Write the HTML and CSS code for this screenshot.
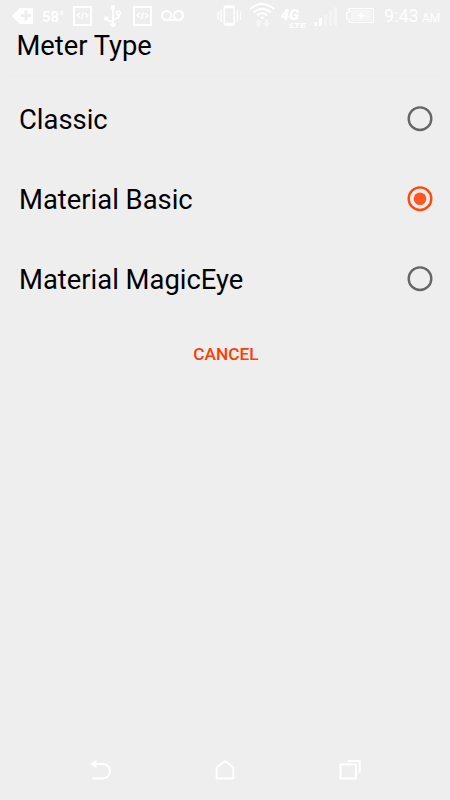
FILE: index.html
```
<!DOCTYPE html>
<html lang="en">
<head>
    <meta charset="UTF-8">
    <meta name="viewport" content="width=device-width, initial-scale=1.0">
    <title>Meter Type</title>
    <link rel="stylesheet" href="styles.css">
</head>
<body>
    <div class="status-bar">
        <svg class="tag" width="22" height="32" viewBox="12 0 22 32">
            <path fill="#fff" d="M12 16L18.500 9Q19 8 20 8H33V24H20Q19 24 18.500 23Z"/>
            <path stroke="#eee" stroke-width="3" d="M21 15.500H31M26 10.500V20.500"/>
        </svg>
        <span class="temp">58<span class="degree">°</span></span>
        <svg class="code" width="20" height="32" viewBox="73 0 20 32">
            <rect x="74" y="7" width="17" height="18" fill="none" stroke="#fff" stroke-width="2"/>
            <path fill="none" stroke="#fff" stroke-width="1.200" d="M80 13L77 15.500L80 18M85 13L88 15.500L85 18M83.500 12L81.500 19"/>
        </svg>
        <svg class="usb" width="18" height="32" viewBox="104 0 18 32">
            <g fill="none" stroke="#fff" stroke-width="1.800">
                <path d="M113 8V24M106 17V18.500Q106 20 108 20.500L113 22M119 15V16Q119 18 117 18.500L113 19.500"/>
                <circle cx="118.500" cy="13" r="1.900" stroke-width="1.500"/>
            </g>
            <circle cx="113" cy="7.200" r="2.200" fill="#fff"/>
            <circle cx="106.200" cy="18.500" r="2.300" fill="#fff"/>
            <path fill="#fff" d="M110 23.500H116V25.500H114.500V27H111.500V25.500H110Z"/>
        </svg>
        <svg class="code2" width="20" height="32" viewBox="73 0 20 32">
            <rect x="74" y="7" width="17" height="18" fill="none" stroke="#fff" stroke-width="2"/>
            <path fill="none" stroke="#fff" stroke-width="1.200" d="M80 13L77 15.500L80 18M85 13L88 15.500L85 18M83.500 12L81.500 19"/>
        </svg>
        <svg class="voicemail" width="24" height="32" viewBox="161 0 24 32">
            <g fill="none" stroke="#fff" stroke-width="2.200">
                <circle cx="166.500" cy="15.500" r="4.500"/>
                <circle cx="178.500" cy="15.500" r="4.500"/>
                <path d="M166.500 20H178.500"/>
            </g>
        </svg>
        <svg class="vibrate" width="25" height="32" viewBox="217 0 25 32">
            <rect x="224.300" y="6" width="10" height="19" rx="2" fill="none" stroke="#fff" stroke-width="1.600"/>
            <path stroke="#fff" stroke-width="2.500" d="M224.500 7H234M224.500 24H234"/>
            <path stroke="#fff" stroke-width="1.300" d="M218 11.500V20M221 9.500V22M237.500 9.500V22M240.500 11.500V20"/>
        </svg>
        <svg class="wifi" width="26" height="32" viewBox="249 0 26 32">
            <path fill="none" stroke="#fff" stroke-width="1.800" d="M250 9Q262 -1 274.500 9M253.500 12.500Q262 5 271 12.500M257 15.500Q262 11 267.500 15.500"/>
            <path fill="#fff" d="M260 17.300Q262.200 15.500 264.400 17.300L262.200 19.500Z"/>
            <path fill="#f6f6f6" d="M258.500 19L262.500 23H260V27H257V23H254.500ZM266.500 27L262.500 23H265V19.500H268V23H270.500Z"/>
        </svg>
        <svg class="network" width="27" height="32" viewBox="281 0 27 32">
            <g class="network-text">
                <text x="280.500" y="19.500" font-size="14" textLength="18.500" lengthAdjust="spacingAndGlyphs">4G</text>
                <text x="289.500" y="27.500" font-size="7.500" textLength="16" lengthAdjust="spacingAndGlyphs">LTE</text>
            </g>
        </svg>
        <svg class="signal" width="25" height="32" viewBox="313 0 25 32">
            <path fill="#fff" d="M314 22H317V26H314ZM319 18H322V26H319Z"/>
            <path fill="#f4f4f4" d="M324 15H327V26H324ZM329 11H332V26H329ZM334 7H337V26H334Z"/>
        </svg>
        <svg class="battery" width="29" height="32" viewBox="346 0 29 32">
            <path fill="#f5f5f5" d="M350.500 10H371.500V21H350.500Z"/>
            <path fill="none" stroke="#fff" stroke-width="1.200" d="M349 8.500H373.500V22.500H349V19H346.700V12.500H349Z"/>
            <path fill="#fff" d="M363.500 11L357 16H361L358.500 20.500L365.500 15H361.500Z"/>
        </svg>
        <span class="time">9:43</span>
        <span class="ampm">AM</span>
    </div>

    <div class="dialog">
        <h1 class="title">Meter Type</h1>
        <div class="options">
            <div class="option">
                <span class="label">Classic</span>
                <svg class="radio" width="26" height="26" viewBox="0 0 26 26">
                    <circle class="ring" cx="13" cy="12.700" r="11.300"/>
                </svg>
            </div>
            <div class="option">
                <span class="label">Material Basic</span>
                <svg class="radio checked" width="26" height="26" viewBox="0 0 26 26">
                    <circle class="ring" cx="13" cy="12.700" r="11.300"/>
                    <circle class="dot" cx="13" cy="12.700" r="6.300"/>
                </svg>
            </div>
            <div class="option">
                <span class="label">Material MagicEye</span>
                <svg class="radio" width="26" height="26" viewBox="0 0 26 26">
                    <circle class="ring" cx="13" cy="12.700" r="11.300"/>
                </svg>
            </div>
        </div>
        <button class="cancel">CANCEL</button>
    </div>

    <div class="nav-bar">
        <svg width="24" height="24" viewBox="0 0 24 24">
            <path fill="none" stroke="#fff" stroke-width="2" stroke-linecap="round" d="M6 7H15A7 7.200 0 0 1 15 21.500H5"/>
            <path fill="#fff" d="M2 7L8.500 3V11Z"/>
        </svg>
        <svg width="24" height="24" viewBox="0 0 24 24">
            <path fill="none" stroke="#fff" stroke-width="2" stroke-linejoin="round" d="M3.700 10.500L12 4L20.300 10.500V21.500H3.700Z"/>
        </svg>
        <svg width="24" height="24" viewBox="0 0 24 24">
            <path fill="none" stroke="#fff" stroke-width="2" stroke-linejoin="round" d="M3.500 7.500H19V21.500H3.500Z"/>
            <path fill="none" stroke="#fff" stroke-width="2" stroke-linecap="round" d="M11.500 4H22.700V15"/>
        </svg>
    </div>
</body>
</html>
```
FILE: styles.css
```
html,body{
    margin: 0px;
    padding: 0px;
    height: 100%;
}
body{
    display: flex;
    flex-direction: column;
    background-color: #eee;
    color: #000;
    font-family: Roboto, "Noto Sans", sans-serif;
    overflow: hidden;
}
.status-bar{
    display: flex;
    height: 32px;
    line-height: 32px;
    padding-left: 12px;
    color: #fff;
    white-space: nowrap;
}
.status-bar>svg{
    flex: none;
}
.temp{
    width: 22px;
    margin-left: 8px;
    padding-top: 1px;
    font-size: 15px;
    font-weight: 700;
}
.degree{
    font-size: 12px;
    vertical-align: 1px;
}
.code{
    margin-left: 9px;
}
.usb{
    margin-left: 11px;
}
.code2{
    margin-left: 11px;
}
.voicemail{
    margin-left: 8px;
}
.vibrate{
    margin-left: 32px;
}
.wifi{
    margin-left: 7px;
}
.network{
    margin-left: 6px;
}
.network-text{
    fill: #fff;
    font-weight: 900;
    font-style: italic;
}
.signal{
    margin-left: 5px;
}
.battery{
    margin-left: 8px;
}
.time{
    width: 34px;
    margin-left: 9px;
    font-size: 18px;
}
.ampm{
    margin-left: 4px;
    padding-top: 2px;
    font-size: 12px;
}
.dialog{
    flex: 1;
    display: flex;
    flex-direction: column;
}
.title{
    margin: 0px 3px 0px 5px;
    padding-left: 11.5px;
    height: 43px;
    line-height: 28px;
    font-size: 27.3px;
    font-weight: 400;
    border-bottom: 1px solid #ececec;
}
.options{
    padding: 3px 17px 0px 19px;
}
.option{
    display: flex;
    justify-content: space-between;
    align-items: center;
    height: 80px;
    font-size: 27.4px;
}
.label{
    padding-top: 2px;
}
.ring{
    fill: none;
    stroke: #666;
    stroke-width: 2.4;
}
.checked .ring{
    stroke: #ff4a0a;
}
.dot{
    fill: #ff5722;
}
.cancel{
    align-self: center;
    margin: 15px 0px 0px 2px;
    padding: 0px;
    height: 40px;
    border: none;
    background: none;
    color: #ff3d00;
    font-family: inherit;
    font-size: 17.3px;
    font-weight: 500;
    cursor: pointer;
}
.nav-bar{
    display: flex;
    justify-content: space-between;
    height: 43px;
    padding: 0px 89px 0px 88px;
}
```
